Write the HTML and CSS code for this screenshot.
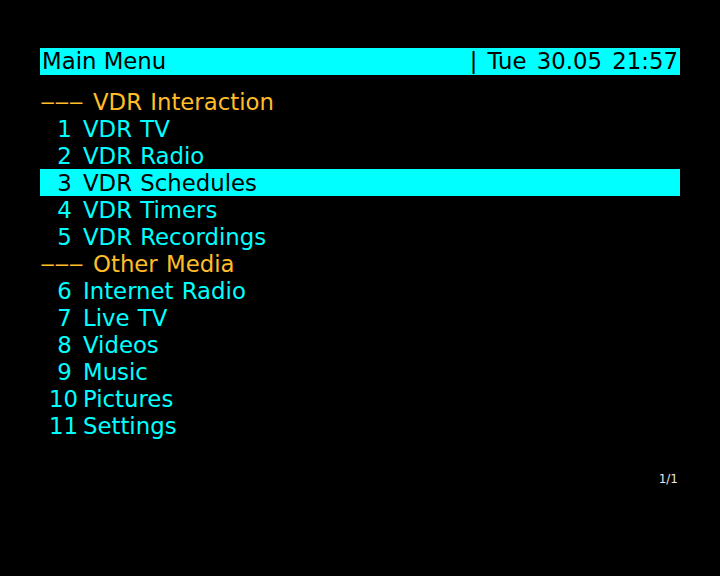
FILE: index.html
```html
<!DOCTYPE html>
<html lang="en">
<head>
  <meta charset="UTF-8" />
  <title>Main Menu</title>
  <link rel="stylesheet" href="styles.css">
</head>
<body>
  <div class="osd">
    <header class="title">
      <span>Main Menu</span>
      <span class="clock">| Tue 30.05 21:57</span>
    </header>

    <ul class="menu">
      <li class="sep"><span class="dash">–––</span>VDR Interaction</li>
      <li><span class="num"> 1</span>VDR TV</li>
      <li><span class="num"> 2</span>VDR Radio</li>
      <li class="current"><span class="num"> 3</span>VDR Schedules</li>
      <li><span class="num"> 4</span>VDR Timers</li>
      <li><span class="num"> 5</span>VDR Recordings</li>
      <li class="sep"><span class="dash">–––</span>Other Media</li>
      <li><span class="num"> 6</span>Internet Radio</li>
      <li><span class="num"> 7</span>Live TV</li>
      <li><span class="num"> 8</span>Videos</li>
      <li><span class="num"> 9</span>Music</li>
      <li><span class="num">10</span>Pictures</li>
      <li><span class="num">11</span>Settings</li>
    </ul>

    <div class="pages">1/1</div>
  </div>
</body>
</html>
```

FILE: styles.css
```css
:root {
  --cyan: #00ffff; --orange: #ffbe28; --bg: #000;
}
html, body {
  margin: 0; padding: 0;
  background: var(--bg);
  font-family: 'DejaVu Sans', sans-serif;
}
.osd { width: 640px; padding: 48px 40px 0; }
.title {
  display: flex; justify-content: space-between;
  height: 27px; line-height: 26px;
  padding: 0 2px 0 2px;
  background: var(--cyan); color: #000;
  font-size: 22.8px;
}
.clock { word-spacing: 3px; }
.menu { list-style: none; margin: 13px 0 0; padding: 0; }
.menu li {
  height: 27px; line-height: 29px;
  font-size: 22.8px; color: var(--cyan);
  padding-left: 9px; white-space: pre;
  word-spacing: 1px;
}
.menu li.sep { color: var(--orange); padding-left: 0; }
.menu li.current { background: var(--cyan); color: #000; }
.dash {
  display: inline-block; width: 39px; margin-right: 14px;
  letter-spacing: -0.8px; overflow: visible;
  transform: scaleX(1.35); transform-origin: left center;
}
.num { display: inline-block; width: 34px; }
.pages {
  margin-top: 33px; text-align: right;
  font-size: 12px; color: #e8e8e8; padding-right: 2px;
}
```
